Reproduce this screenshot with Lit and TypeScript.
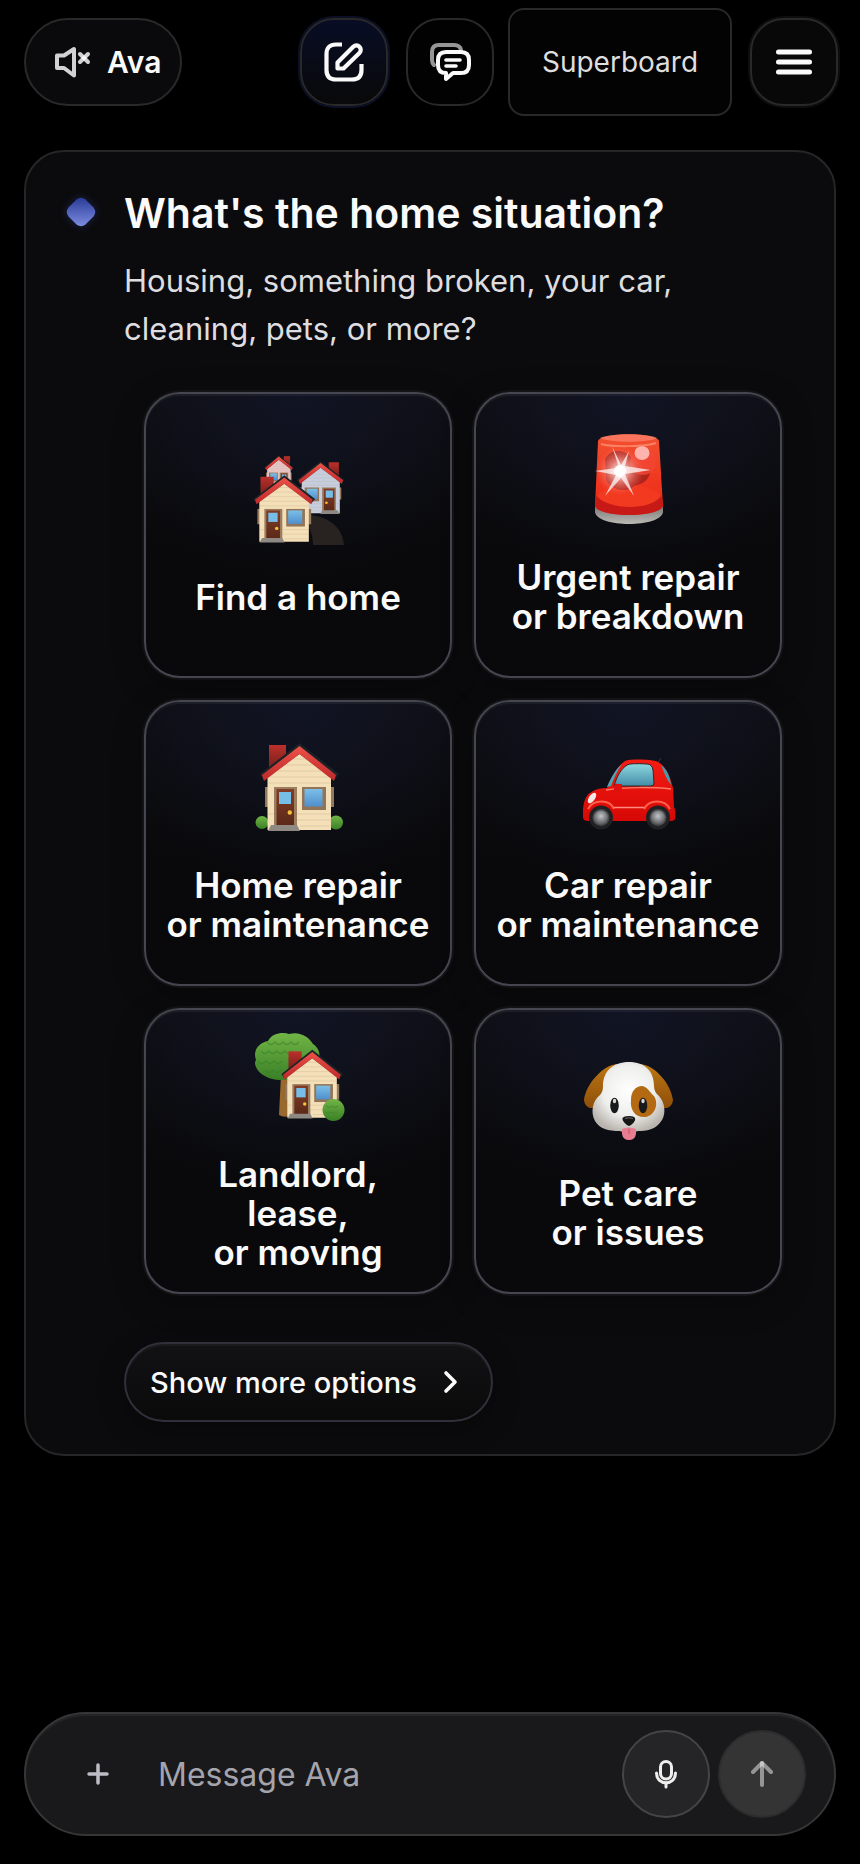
import { LitElement, html, css, svg } from 'lit';
import type { TemplateResult } from 'lit';
import { customElement, state } from 'lit/decorators.js';

interface Option {
  id: string;
  lines: string[];
  art: TemplateResult;
}

// One cottage, reused at several sizes. Drawn on a 92x90 grid.
const house = (wall = '#f3dfb8') => svg`
  <rect x="16" y="3" width="17" height="24" fill="url(#brick)" />
  <rect x="12" y="45" width="69" height="20" fill="#96795c" />
  <path d="M14.500 32 46.500 7 78 32V88H14.500Z" fill=${wall} />
  <g stroke="#b89f78" stroke-opacity=".4" stroke-width=".8">
    <path d="M40 17H53M33 23H60M25 29H68M17 35H76M15 41H78M15 72H21M44 72H78M44 78H78M47 84H78" />
  </g>
  <path d="M46.500 1 86 32 81 38 46.500 12 11 38 7 32Z" fill="#1c2326" />
  <path d="M46.500 4 83 33 81 39 46.500 12 11 39 9 33Z" fill="url(#roof)" />
  <rect x="21" y="45" width="23" height="39" fill="#9a7c5f" />
  <rect x="23.500" y="47" width="17.500" height="37" fill="url(#door)" />
  <rect x="26" y="50" width="12" height="12" fill="#76bde8" />
  <circle cx="36.800" cy="70.500" r="2.200" fill="#f4c13c" />
  <rect x="49" y="45" width="24" height="23" fill="#927558" />
  <rect x="51.500" y="47" width="18" height="17.500" fill="url(#glass)" />
  <path d="M18 83H44L47 89H15Z" fill="#8f8983" />
`;

const homes = svg`
  <path d="M55 61C76 62 90 74 91 91H60C60 83 58 77 55 73Z" fill="#282221" />
  <g transform="translate(43 1) scale(-.37 .39)">${house('#e6c5c5')}</g>
  <g transform="translate(95.500 6.500) scale(-.6 .6)">${house('#c6cede')}</g>
  <g transform="translate(-5 20.500) scale(.78 .765)">${house()}</g>
`;

const siren = svg`
  <path d="M12 72V78C14 94 78 94 80 78V72Z" fill="url(#metal)" />
  <path d="M15 7C17-2 74-2 76 7L80 72C76 84 16 84 12 72Z" fill="url(#lamp)" />
  <path d="M13 63C23 50 68 50 79 63L80 72C76 84 16 84 12 72Z" fill="#bd1717" opacity=".8" />
  <path d="M14 62C25 47 66 47 78 62C68 77 24 76 14 62Z" fill="#f23a20" />
  <path d="M22 25C28 14 41 15 49 24C55 33 61 37 68 34C66 51 56 49 50 53C43 59 28 56 23 46Z" fill="#8b1818" opacity=".65" />
  <circle cx="60" cy="28" r="13" fill="#f14635" opacity=".8" />
  <ellipse cx="59" cy="19" rx="7.500" ry="7" fill="#ffb3ad" />
  <circle cx="37" cy="37" r="24" fill="url(#flare)" />
  <path d="M37 37 29 12 38 31 46 17 42 32 68 36 42 40 51 62 38 44 22 62 33 41 12 37 33 34Z" fill="#fff" opacity=".72" />
  <circle cx="37" cy="37" r="6" fill="#fff" />
  <path d="M18 10C28 13 62 13 73 9" fill="none" stroke="#ff9275" stroke-width="2" opacity=".75" />
  <path d="M17 4C28-1 64-1 74 4C65 9 27 9 17 4Z" fill="#ff8975" opacity=".65" />
`;

const cottage = svg`
  <circle cx="9" cy="80.500" r="6.500" fill="url(#leaf)" />
  <circle cx="83" cy="80.500" r="7" fill="url(#leaf)" />
  ${house()}
`;

const wheel = (x: number) => svg`
  <circle cx=${x} cy="75.500" r="12" fill="#202123" />
  <circle cx=${x} cy="75.500" r="8.500" fill="#494b4e" />
  <circle cx=${x} cy="75.500" r="7" fill="url(#hub)" />
`;

const car = svg`
  <path d="M74 22 78 16" stroke="#34383c" />
  <path d="M24 46C29 34 34 25 42 19C48 17 68 17 75 20C84 24 88 38 90 46L91 65Q93 68 92 77Q91 79 87 79H5Q0 79 0 75V67Q1 53 10 49Q15 46 24 46Z" fill="url(#paint)" />
  <path d="M24 45C28 35 33 27 39 22C34 29 31 36 28 44Z" fill="#4da6b5" />
  <path d="M31 44C34 34 38 27 44 23Q47 21 64 22Q69 22 70 28L71 41Q71 44 68 44Z" fill="url(#carGlass)" stroke="#322629" />
  <path d="M78 23C84 27 87 35 88 43C84 38 81 31 78 23Z" fill="#419bad" />
  <path d="M23 48C40 45 70 45 88 47" fill="none" stroke="#ff7a68" stroke-width="1.500" />
  <path d="M30 65.500H63" stroke="#ff8a7d" stroke-width="1.300" />
  <path d="M5 67C10 57 27 57 31 67M61 67C66 57 82 57 87 67" fill="none" stroke="#ff604e" stroke-width="2" />
  <ellipse cx="9" cy="56" rx="3" ry="6" transform="rotate(35 9 56)" fill="#f6e8e5" />
  <path d="M31 44Q31 41 35 42H39V49Q34 52 31 48Z" fill="#dd100e" />
  ${wheel(18)}${wheel(75)}
`;

const garden = svg`
  <path d="M28 44H36V85Q31 87 26 84Z" fill="#97692e" />
  <path d="M3 29C-1 18 8 11 15 10C19 2 30 1 36 3C47 0 56 6 60 13C68 18 69 29 61 37C50 45 39 49 29 49C19 50 6 44 3 36Q1 32 3 29Z" fill="url(#leaf)" />
  <path d="M8 20q4 5 8 0q4 5 8 0q4 5 8 0q4 5 8 0M14 11q4 5 8 0q4 5 8 0q4 5 8 0q4 5 8 0M5 30q4 5 8 0q4 5 8 0q4 5 8 0M12 39q4 5 8 0q4 5 8 0" fill="none" stroke="#377f28" stroke-width="1.300" opacity=".55" />
  <g transform="translate(23 18) scale(.78)">${house()}</g>
  <circle cx="80.500" cy="79" r="11" fill="url(#leaf)" />
  <path d="M73 75q3 3 6 0q3 3 6 0M72 81q3 3 6 0q3 3 6 0" fill="none" stroke="#3c8128" opacity=".7" />
`;

const dog = svg`
  <path d="M34 14C20 15 3 34 1 50C2 60 13 61 17 51L27 31Z" fill="url(#ear)" />
  <path d="M57 14C72 15 88 34 90 50C89 60 78 61 74 51L64 31Z" fill="url(#ear)" />
  <path d="M20 36C20 21 30 12 46 12C62 12 71 21 71 36Q71 42 76 46C82 53 83 63 79 70C73 80 63 81 55 81Q45 85 37 81C25 81 17 79 12 71C7 62 10 50 17 45Q20 42 20 36Z" fill="url(#fur)" />
  <path d="M48 50C48 41 53 36 59 36C65 37 67 43 71 46C76 54 72 65 63 67C52 68 47 60 48 50Z" fill="#b36a12" />
  <ellipse cx="31.500" cy="55.500" rx="4.300" ry="7.700" fill="#17191a" />
  <ellipse cx="60" cy="55.500" rx="4.300" ry="7.700" fill="#17191a" />
  <ellipse cx="31.500" cy="51" rx="1.700" ry="2.300" fill="#d5d7d6" />
  <ellipse cx="60" cy="51" rx="1.700" ry="2.300" fill="#d5d7d6" />
  <path d="M39 79Q46 76 53 79V84Q52 90 46 90T39 84Z" fill="#e87c91" />
  <path d="M46 79V84" stroke="#bd5369" />
  <path d="M39.500 68Q41 66 46 66T52 68C53 71 49 75 46 76C43 75 39 71 39.500 68Z" fill="#171616" />
  <path d="M42 68.500Q46 67 50 68.500" fill="none" stroke="#696969" />
`;

const options: Option[] = [
  { id: 'find', lines: ['Find a home'], art: homes },
  { id: 'urgent', lines: ['Urgent repair', 'or breakdown'], art: siren },
  { id: 'home', lines: ['Home repair', 'or maintenance'], art: cottage },
  { id: 'car', lines: ['Car repair', 'or maintenance'], art: car },
  { id: 'landlord', lines: ['Landlord,', 'lease,', 'or moving'], art: garden },
  { id: 'pet', lines: ['Pet care', 'or issues'], art: dog },
];

@customElement('app-root')
export class AppRoot extends LitElement {
  @state() private draft = '';

  static styles = css`
    :host {
      display: flex;
      flex-direction: column;
      box-sizing: border-box;
      min-height: 100vh;
      padding: 8px 24px 28px;
      background: #000;
      color: #fafafa;
      font-family: Inter, 'Liberation Sans', sans-serif;
    }

    * {
      box-sizing: border-box;
    }

    button,
    input {
      margin: 0;
      font: inherit;
      color: inherit;
    }

    button {
      display: flex;
      align-items: center;
      justify-content: center;
      padding: 0;
      cursor: pointer;
    }

    svg {
      display: block;
      flex: none;
      overflow: visible;
    }

    .line {
      fill: none;
      stroke: currentColor;
      stroke-linecap: round;
      stroke-linejoin: round;
    }

    .defs {
      position: absolute;
    }

    .topbar {
      display: flex;
      align-items: center;
      height: 108px;
      margin-right: -2px;
    }

    .voice {
      gap: 15px;
      height: 88px;
      padding: 0 19px 0 28px;
      margin-right: auto;
      border: 2px solid #29292a;
      border-radius: 44px;
      background: #0a0a0c;
      font-size: 30px;
      font-weight: 600;
    }

    .voice svg {
      color: rgba(255, 255, 255, 0.82);
    }

    .tools {
      display: flex;
      align-items: center;
      gap: 18px;
    }

    .group {
      display: flex;
      align-items: center;
      gap: 14px;
    }

    .square {
      width: 88px;
      height: 88px;
      border: 2px solid #29292a;
      border-radius: 34px;
      background: #020202;
    }

    .compose {
      background: linear-gradient(#080d25, #090909);
      box-shadow: 0 0 0 2px #0b1026;
    }

    .menu {
      background: #080808;
      box-shadow: 0 0 0 2px #0d0d0f;
    }

    .board {
      width: 224px;
      height: 108px;
      border: 2px solid #29292a;
      border-radius: 16px;
      background: #030303;
      color: #dedede;
      font-size: 28px;
    }

    .panel {
      display: grid;
      grid-template-columns: 30px minmax(0, 1fr);
      column-gap: 28px;
      margin-top: 34px;
      padding: 36px 33px 32px 40px;
      border: 2px solid #262627;
      border-radius: 40px;
      background: #0b0b0d;
    }

    .gem {
      margin-top: 9px;
      filter: drop-shadow(0 0 4px rgba(65, 88, 220, 0.3));
    }

    h1 {
      margin: 0 0 19px;
      font-size: 41px;
      font-weight: 600;
      line-height: 50px;
    }

    .hint {
      max-width: 600px;
      margin: 0 0 39px;
      color: #dedee0;
      font-size: 31px;
      line-height: 48px;
    }

    .options {
      display: grid;
      grid-template-columns: 1fr 1fr;
      gap: 22px;
      padding: 0 19px 0 20px;
    }

    .option {
      flex-direction: column;
      gap: 34px;
      height: 286px;
      border: 2px solid #464650;
      border-radius: 36px;
      background:
        radial-gradient(ellipse 70% 65% at 50% 0, #111424, transparent),
        linear-gradient(#0e0e11, #09090b 55%);
      box-shadow:
        0 0 0 2px #131316,
        0 8px 32px rgba(0, 0, 0, 0.3),
        inset 0 2px 0 rgba(255, 255, 255, 0.05);
      font-size: 35px;
      font-weight: 600;
      line-height: 39px;
    }

    .option span span {
      display: block;
    }

    .more {
      gap: 27px;
      height: 80px;
      margin-top: 48px;
      padding: 0 33px 0 24px;
      border: 2px solid #30303a;
      border-radius: 40px;
      background: linear-gradient(#121214, #0a0a0b);
      box-shadow:
        0 8px 28px rgba(0, 0, 0, 0.3),
        inset 0 2px 0 rgba(255, 255, 255, 0.04);
      font-size: 29px;
      font-weight: 500;
    }

    .composer {
      display: flex;
      align-items: center;
      gap: 8px;
      height: 124px;
      margin-top: auto;
      padding: 0 28px 0 32px;
      border: 2px solid #363637;
      border-radius: 62px;
      background: #19191b;
      box-shadow: inset 0 2px 0 #252527;
    }

    .add {
      width: 80px;
      height: 80px;
      border: 0;
      background: none;
      color: #bdbdc5;
    }

    .message {
      flex: 1;
      min-width: 0;
      height: 80px;
      padding: 0 12px;
      border: 0;
      outline: 0;
      background: none;
      font-size: 32px;
    }

    .message::placeholder {
      color: #a4a4ad;
      opacity: 1;
    }

    .round {
      flex: none;
      width: 88px;
      height: 88px;
      border: 2px solid #454547;
      border-radius: 50%;
      background: #252528;
      color: #eee;
    }

    .send {
      border-color: #2c2c2d;
      background: #343434;
      color: rgba(255, 255, 255, 0.48);
    }
  `;

  render() {
    return html`
      ${this._renderDefs()}
      <header class="topbar">
        <button class="voice" type="button">
          <svg class="line" width="38" height="36" viewBox="0 0 38 36" stroke-width="4" aria-hidden="true">
            <path d="M3 11.500H10L20 5V31.500L10 24H3Z" />
            <path d="M26 10 34 18" />
            <path d="M34 10 26 18" />
          </svg>
          Ava
        </button>
        <div class="tools">
          <button class="square compose" type="button" aria-label="New chat">
            <svg class="line" width="40" height="40" viewBox="0 0 40 40" stroke-width="4.200" aria-hidden="true">
              <path stroke-linecap="butt" d="M18 2.500H12Q2.500 2.500 2.500 12V28Q2.500 37.500 12 37.500H28Q37.500 37.500 37.500 28V22" />
              <path d="M13.500 26.500V20.500L29.500 4.500A4.400 4.400 0 0 1 35.700 10.700L19.500 26.500Z" />
            </svg>
          </button>
          <div class="group">
            <button class="square" type="button" aria-label="Chats">
              <svg class="line" width="44" height="42" viewBox="0 0 44 42" stroke-width="4" aria-hidden="true">
                <path opacity=".6" d="M6 24Q4 22 4 19V11Q4 4 11 4H26Q32 4 33 9" />
                <path fill="#020202" d="M18 11H33Q41 11 41 19V24Q41 32 33 32H25L18 38V32Q10 32 10 24V19Q10 11 18 11Z" />
                <path stroke-width="3.600" d="M18 19H32M18 25H28" />
              </svg>
            </button>
            <button class="board" type="button">Superboard</button>
          </div>
          <button class="square menu" type="button" aria-label="Menu">
            <svg class="line" width="36" height="26" viewBox="0 0 36 26" stroke-width="5" aria-hidden="true">
              <path d="M2.500 3H33.500M2.500 13H33.500M2.500 23H33.500" />
            </svg>
          </button>
        </div>
      </header>

      <main class="panel">
        <svg class="gem" width="30" height="30" viewBox="0 0 30 30" aria-hidden="true">
          <path d="M10.500 2.500Q15-1 19.500 2.500L27.500 10.500Q31 15 27.500 19.500L19.500 27.500Q15 31 10.500 27.500L2.500 19.500Q-1 15 2.500 10.500Z" fill="url(#gem)" />
        </svg>
        <div>
          <h1>What's the home situation?</h1>
          <p class="hint">Housing, something broken, your car, cleaning, pets, or more?</p>
          <div class="options">${options.map((option) => this._renderOption(option))}</div>
          <button class="more" type="button">
            Show more options
            <svg class="line" width="14" height="22" viewBox="0 0 14 22" stroke-width="3.600" aria-hidden="true">
              <path d="M2 2 11 11 2 20" />
            </svg>
          </button>
        </div>
      </main>

      <form class="composer" @submit=${this._onSubmit}>
        <button class="add" type="button" aria-label="Add attachment">
          <svg class="line" width="22" height="22" viewBox="0 0 22 22" stroke-width="3.500" aria-hidden="true">
            <path d="M11 2V20M2 11H20" />
          </svg>
        </button>
        <input
          class="message"
          type="text"
          placeholder="Message Ava"
          aria-label="Message Ava"
          .value=${this.draft}
          @input=${this._onInput}
        />
        <button class="round" type="button" aria-label="Dictate">
          <svg class="line" width="24" height="30" viewBox="0 0 24 30" stroke-width="3" aria-hidden="true">
            <rect x="6.500" y="2.500" width="11" height="17.500" rx="5.500" />
            <path d="M2.500 14C2.500 27 21.500 27 21.500 14" />
            <path d="M12 25V28" />
          </svg>
        </button>
        <button class="round send" type="submit" aria-label="Send">
          <svg class="line" width="22" height="26" viewBox="0 0 22 26" stroke-width="4" aria-hidden="true">
            <path d="M2 11 11 2 20 11" />
            <path d="M11 2V24" />
          </svg>
        </button>
      </form>
    `;
  }

  _renderOption(option: Option) {
    return html`
      <button class="option" type="button" @click=${() => this._select(option.id)}>
        <svg width="90" height="90" viewBox="0 0 90 90" aria-hidden="true">${option.art}</svg>
        <span>${option.lines.map((line) => html`<span>${line}</span>`)}</span>
      </button>
    `;
  }

  // Gradients shared by the drawings
  _renderDefs() {
    const fade = (id: string, from: string, to: string) => svg`
      <linearGradient id=${id} x1="0" y1="0" x2="0" y2="1">
        <stop stop-color=${from} /><stop offset="1" stop-color=${to} />
      </linearGradient>`;
    const glow = (id: string, from: string, mid: string, to: string) => svg`
      <radialGradient id=${id} cx=".5" cy=".4" r=".6">
        <stop stop-color=${from} /><stop offset=".6" stop-color=${mid} /><stop offset="1" stop-color=${to} />
      </radialGradient>`;
    return html`
      <svg class="defs" width="0" height="0" aria-hidden="true">
        <defs>
          ${fade('gem', '#2b3c99', '#7c8ce0')}
          ${fade('brick', '#bd302a', '#721e1c')}
          ${fade('roof', '#ed5148', '#bd292a')}
          ${fade('door', '#813c26', '#5b2818')}
          ${fade('glass', '#7bbfe7', '#4f8fce')}
          ${fade('lamp', '#f25131', '#ed2514')}
          ${fade('metal', '#777', '#bcbab4')}
          ${fade('paint', '#f51c13', '#d60805')}
          ${fade('carGlass', '#8ed8df', '#448da9')}
          ${fade('leaf', '#72b546', '#397f26')}
          ${fade('ear', '#bd7715', '#8e4e09')}
          ${glow('hub', '#c4c6c9', '#808286', '#55575a')}
          ${glow('fur', '#ffffff', '#eeeeec', '#b9b4ad')}
          <radialGradient id="flare">
            <stop stop-color="#fff" />
            <stop offset=".35" stop-color="#ffc0b8" stop-opacity=".7" />
            <stop offset="1" stop-color="#ff6a5d" stop-opacity="0" />
          </radialGradient>
        </defs>
      </svg>
    `;
  }

  _select(id: string) {
    this.dispatchEvent(new CustomEvent('option-select', { detail: { id }, bubbles: true, composed: true }));
  }

  _onInput(event: Event) {
    this.draft = (event.target as HTMLInputElement).value;
  }

  _onSubmit(event: Event) {
    event.preventDefault();
    this.draft = '';
  }
}
